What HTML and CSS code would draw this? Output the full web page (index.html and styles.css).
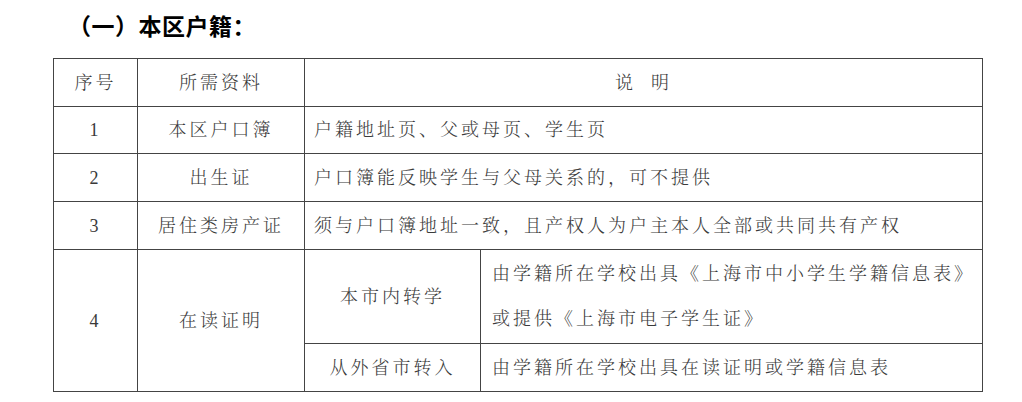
FILE: index.html
```html
<!DOCTYPE html>
<html lang="zh-CN">
<head>
<meta charset="utf-8">
<title>本区户籍</title>
<link rel="stylesheet" href="styles.css">
</head>
<body>
<div class="page">
  <h2 class="title">（一）本区户籍：</h2>
  <table class="docs">
    <colgroup>
      <col class="c-no">
      <col class="c-name">
      <col class="c-sub">
      <col class="c-desc">
    </colgroup>
    <tr class="row">
      <td class="center">序号</td>
      <td class="center">所需资料</td>
      <td class="center" colspan="2">说&nbsp;&nbsp;明</td>
    </tr>
    <tr class="row row-short">
      <td class="center">1</td>
      <td class="center">本区户口簿</td>
      <td class="left" colspan="2">户籍地址页、父或母页、学生页</td>
    </tr>
    <tr class="row">
      <td class="center">2</td>
      <td class="center">出生证</td>
      <td class="left" colspan="2">户口簿能反映学生与父母关系的，可不提供</td>
    </tr>
    <tr class="row">
      <td class="center">3</td>
      <td class="center">居住类房产证</td>
      <td class="left" colspan="2">须与户口簿地址一致，且产权人为户主本人全部或共同共有产权</td>
    </tr>
    <tr class="row row-tall">
      <td class="center" rowspan="2">4</td>
      <td class="center" rowspan="2">在读证明</td>
      <td class="center">本市内转学</td>
      <td class="left sub multi">由学籍所在学校出具《上海市中小学生学籍信息表》<br>或提供《上海市电子学生证》</td>
    </tr>
    <tr class="row">
      <td class="center">从外省市转入</td>
      <td class="left sub">由学籍所在学校出具在读证明或学籍信息表</td>
    </tr>
  </table>
</div>
</body>
</html>
```

FILE: styles.css
```css
html, body {
  margin: 0;
  padding: 0;
  background: #ffffff;
}

.page {
  padding: 0 0 0 53px;
}

.title {
  margin: 0;
  padding: 13px 0 0 15px;
  height: 58px;
  box-sizing: border-box;
  font-family: "Noto Sans CJK SC", "Noto Sans", sans-serif;
  font-weight: 700;
  font-size: 23px;
  line-height: 24px;
  letter-spacing: 0.5px;
  color: #000000;
}

.docs {
  border-collapse: collapse;
  table-layout: fixed;
  width: 929px;
  font-family: "Liberation Serif", "Noto Serif CJK SC", "Noto Sans CJK SC", serif;
  font-weight: 300;
  font-size: 18px;
  letter-spacing: 3px;
  color: #3a3a3a;
  border: 1px solid #222222;
}

.c-no { width: 84px; }
.c-name { width: 167px; }
.c-sub { width: 176px; }
.c-desc { width: 502px; }

.docs td {
  border: 1px solid #444444;
  padding: 0;
  vertical-align: middle;
  white-space: nowrap;
  line-height: 24px;
}

.row td {
  height: 47px;
}

.row-short td {
  height: 46px;
}

.row-tall td {
  height: 93px;
}

.center {
  text-align: center;
}

.left {
  text-align: left;
  padding-left: 9px !important;
}

.sub {
  padding-left: 11px !important;
}

.multi {
  line-height: 45px !important;
}
```
